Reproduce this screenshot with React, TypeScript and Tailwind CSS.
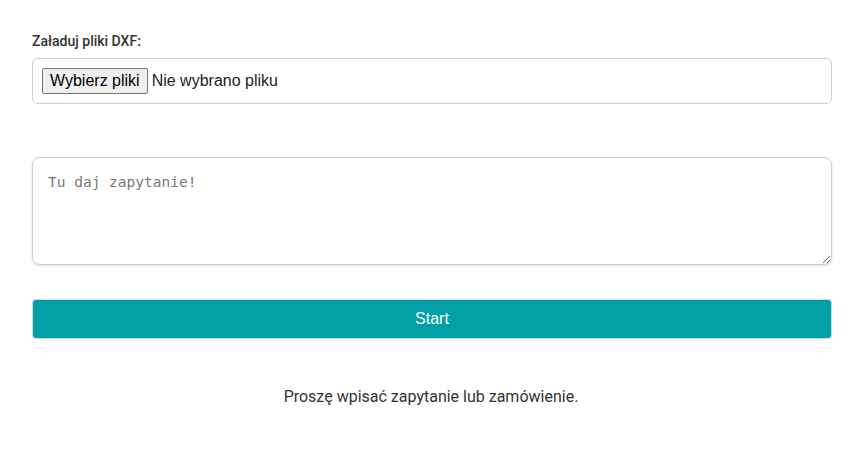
export default function App() {
  return (
    <div className="w-[862px] h-[452px] bg-white px-8 pt-[32px] font-['Roboto','Liberation_Sans',sans-serif]">
      <label className="block text-[14px] font-medium text-[#333] leading-[18px] mb-[8px]">Załaduj pliki DXF:</label>
      <div className="h-[46px] w-[800px] border border-[#ccc] rounded-[6px] flex items-center gap-[4px] pl-[9px] font-['Liberation_Sans',Arial,sans-serif]">
        <button className="h-[26px] px-[7px] bg-[#efefef] border border-[#767676] rounded-[2px] text-[16px] text-black leading-none">
          Wybierz pliki
        </button>
        <span className="text-[16px] text-[#222]">Nie wybrano pliku</span>
      </div>
      <textarea
        placeholder="Tu daj zapytanie!"
        className="mt-[53px] block w-[800px] h-[108px] border border-[#ccc] rounded-[8px] shadow-[0_1px_3px_rgba(0,0,0,0.15)] px-[15px] py-[14px] text-[14.5px] placeholder:text-[#777] outline-none font-['DejaVu_Sans_Mono','Liberation_Mono',monospace]"
      />
      <button className="mt-[34px] block w-[800px] h-[40px] bg-[#00a0a6] rounded-[4px] border border-[#cfd8dc] text-white text-[16px] font-['Liberation_Sans',Arial,sans-serif]">
        Start
      </button>
      <p className="mt-[46px] text-center text-[16px] text-[#333]">Proszę wpisać zapytanie lub zamówienie.</p>
    </div>
  );
}
